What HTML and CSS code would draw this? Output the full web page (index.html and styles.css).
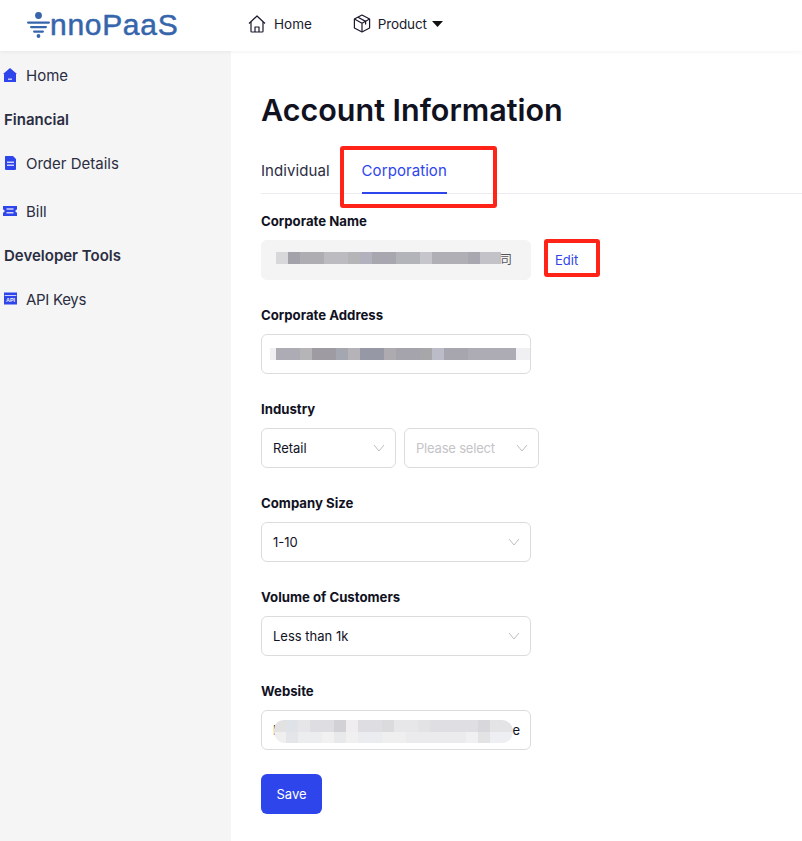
FILE: index.html
```html
<!DOCTYPE html>
<html lang="en">
<head>
<meta charset="utf-8">
<title>Account Information</title>
<link rel="stylesheet" href="styles.css">
</head>
<body>
<header class="topbar">
  <a class="logo">
    <svg class="logo-mark" width="23" height="28" viewBox="0 0 23 28"><circle cx="11.5" cy="4.5" r="3.4" fill="#3665ab"/><rect x="0" y="10.5" width="23" height="2.2" rx="1.1" fill="#3665ab"/><rect x="3" y="15" width="17" height="2.2" rx="1.1" fill="#3665ab"/><rect x="6" y="19.5" width="11" height="2.2" rx="1.1" fill="#3665ab"/><circle cx="11.5" cy="25" r="1.9" fill="#3665ab"/></svg>
    <span class="logo-text">nnoPaaS</span>
  </a>
  <nav class="topnav">
    <a class="topnav-item">
      <svg width="18" height="18" viewBox="0 0 18 18" fill="none" stroke="#1a1a2e" stroke-width="1.2" stroke-linejoin="round"><path d="M1 8.5 9 1l8 7.5"/><path d="M3 7v9.2a.8.8 0 0 0 .8.8h10.4a.8.8 0 0 0 .8-.8V7"/><path d="M7 17v-5h4v5"/></svg>
      <span>Home</span>
    </a>
    <a class="topnav-item">
      <svg width="18" height="19" viewBox="0 0 18 19" fill="none" stroke="#1a1a2e" stroke-width="1.2" stroke-linejoin="round"><path d="M9 1l7.6 4v9L9 18l-7.6-4V5z"/><path d="M1.4 5 9 9.2 16.6 5M9 9.2V18"/><path d="M5 3.2l7.6 4.2v3"/></svg>
      <span class="product-label">Product</span>
      <svg class="caret" width="11" height="6" viewBox="0 0 11 6"><path d="M0 0h11L5.5 6z" fill="#111"/></svg>
    </a>
  </nav>
</header>
<div class="shell">
  <aside class="sidebar">
    <a class="side-item side-home">
      <svg width="14" height="14" viewBox="0 0 14 14"><path d="M7 0 14 6H13V14H1V6H0z" fill="#2f45ec"/><rect x="5" y="10.6" width="4" height="1.1" fill="#f5f5f5"/></svg>
      <span>Home</span>
    </a>
    <div class="side-title side-financial">Financial</div>
    <a class="side-item side-order">
      <svg width="14" height="14" viewBox="0 0 14 14"><path d="M2.5 0H10l3 3v10a1 1 0 0 1-1 1H3a1 1 0 0 1-1-1V.8A.8.8 0 0 1 2.5 0z" fill="#2f45ec"/><rect x="4" y="5.6" width="7" height="1.2" fill="#f5f5f5"/><rect x="4" y="8.6" width="7" height="1.2" fill="#f5f5f5"/></svg>
      <span>Order Details</span>
    </a>
    <a class="side-item side-bill">
      <svg width="14" height="14" viewBox="0 0 14 14"><path d="M0 2h14v3.4a1.6 1.6 0 0 0 0 3.2V12H0V8.600a1.600 1.600 0 0 0 0-3.200z" fill="#2f45ec"/><rect x="3.500" y="4.400" width="7" height="1.200" fill="#f5f5f5"/><rect x="3.500" y="8.200" width="7" height="1.200" fill="#f5f5f5"/></svg>
      <span>Bill</span>
    </a>
    <div class="side-title side-dev">Developer Tools</div>
    <a class="side-item side-api">
      <svg width="14" height="14" viewBox="0 0 14 14"><rect x="1" y="0.500" width="13" height="12" fill="#2f45ec"/><rect x="1.700" y="3" width="11.600" height=".8" fill="#f5f5f5"/><text x="7.500" y="10.400" class="api-text" text-anchor="middle">API</text></svg>
      <span>API Keys</span>
    </a>
  </aside>
  <main class="content">
    <h1 class="page-title">Account Information</h1>
    <div class="tabs">
      <a class="tab">Individual</a>
      <a class="tab tab-active">Corporation</a>
    </div>
    <form class="form">
      <div class="field">
        <div class="label">Corporate Name</div>
        <div class="row">
          <div class="box box-filled">
            <span class="mosaic mosaic-name"></span>
            <span class="name-tail">司</span>
          </div>
          <a class="edit">Edit</a>
        </div>
      </div>
      <div class="field">
        <div class="label">Corporate Address</div>
        <div class="box"><span class="mosaic mosaic-address"></span></div>
      </div>
      <div class="field">
        <div class="label">Industry</div>
        <div class="row row-selects">
          <div class="box select-half">
            <span>Retail</span>
            <svg class="chev" width="12" height="8" viewBox="0 0 12 8" fill="none" stroke="#bfbfbf" stroke-width="1"><path d="M1 1l5 6 5-6"/></svg>
          </div>
          <div class="box select-half">
            <span class="placeholder">Please select</span>
            <svg class="chev" width="12" height="8" viewBox="0 0 12 8" fill="none" stroke="#bfbfbf" stroke-width="1"><path d="M1 1l5 6 5-6"/></svg>
          </div>
        </div>
      </div>
      <div class="field">
        <div class="label">Company Size</div>
        <div class="box">
          <span>1-10</span>
          <svg class="chev" width="12" height="8" viewBox="0 0 12 8" fill="none" stroke="#bfbfbf" stroke-width="1"><path d="M1 1l5 6 5-6"/></svg>
        </div>
      </div>
      <div class="field">
        <div class="label">Volume of Customers</div>
        <div class="box">
          <span>Less than 1k</span>
          <svg class="chev" width="12" height="8" viewBox="0 0 12 8" fill="none" stroke="#bfbfbf" stroke-width="1"><path d="M1 1l5 6 5-6"/></svg>
        </div>
      </div>
      <div class="field">
        <div class="label">Website</div>
        <div class="box">
          <span>h</span>
          <span class="mosaic mosaic-web"></span>
          <span class="web-tail">e</span>
        </div>
      </div>
      <a class="save">Save</a>
    </form>
    <div class="mark mark-tab"></div>
    <div class="mark mark-edit"></div>
  </main>
</div>
</body>
</html>
```
FILE: styles.css
```css
* { box-sizing: border-box; }
html, body { margin: 0; padding: 0; }
body {
  width: 802px;
  height: 841px;
  overflow: hidden;
  background: #fff;
  color: #11121f;
  font-family: Inter, "Noto Sans", "Noto Sans CJK SC", sans-serif;
  font-size: 14px;
}
.topbar {
  position: relative;
  z-index: 2;
  height: 51px;
  display: flex;
  align-items: center;
  background: #fff;
  box-shadow: 0 1px 4px rgba(0, 0, 0, 0.06);
}
.logo { display: flex; align-items: center; margin-left: 27px; width: 221px; padding-bottom: 2px; }
.logo-mark { flex: none; }
.logo-text {
  font-family: "Liberation Sans", Arial, sans-serif;
  font-size: 30px;
  color: #3665ab;
  letter-spacing: 0.7px;
  -webkit-text-stroke: 0.5px #3665ab;
}
.topnav { display: flex; gap: 41px; padding-bottom: 4px; }
.topnav-item { display: flex; align-items: center; gap: 7px; font-size: 13.5px; color: #1a1a2e; }
.topnav-item:first-child { gap: 8px; }
.product-label { letter-spacing: -0.15px; }
.caret { margin-left: -2px; }
.shell { display: flex; height: 790px; position: relative; }
.sidebar {
  width: 231px;
  flex: none;
  background: #f5f5f5;
  color: #2b2d42;
  padding-top: 13px;
}
.side-item { display: flex; align-items: center; gap: 9px; padding-left: 3px; height: 22px; font-size: 15px; color: #2b2d42; }
.side-title { padding-left: 4px; height: 22px; line-height: 22px; font-size: 15px; font-weight: 600; color: #2b2d42; }
.side-financial { margin-top: 23px; }
.side-order { margin-top: 21px; }
.side-bill { margin-top: 26px; }
.side-dev { margin-top: 23px; }
.side-api { margin-top: 21px; }
.side-api span { letter-spacing: -0.3px; }
.api-text { font-family: "Liberation Sans", sans-serif; font-size: 5.5px; font-weight: 700; fill: #f5f5f5; }
.content { flex: 1; padding-left: 30px; position: relative; }
.page-title { margin: 40px 0 0; font-size: 30.5px; line-height: 38px; font-weight: 600; color: #11121f; }
.tabs {
  display: flex;
  gap: 32px;
  margin-top: 21px;
  height: 44px;
  border-bottom: 1px solid #ececf0;
}
.tab { height: 44px; line-height: 24px; padding-top: 9px; font-size: 15px; letter-spacing: 0.07px; color: #2b2d42; }
.tab-active { color: #2f45ec; border-bottom: 2px solid #2f45ec; }
.form { display: flex; flex-direction: column; margin-top: 17px; }
.field { height: 94px; }
.label { height: 20px; line-height: 20px; font-size: 13.2px; font-weight: 700; color: #11121f; margin-bottom: 9px; }
.row { display: flex; align-items: center; gap: 24px; }
.row-selects { gap: 8px; }
.box {
  width: 270px;
  height: 40px;
  border: 1px solid #dcdcdf;
  border-radius: 6px;
  display: flex;
  align-items: center;
  justify-content: space-between;
  padding: 0 10px 0 11px;
  background: #fff;
  font-size: 13px;
  color: #11121f;
  position: relative;
}
.box-filled { background: #f4f4f5; border-color: #f4f4f5; }
.select-half { width: 135px; }
.placeholder { color: #c4c4c8; letter-spacing: -0.2px; }
.chev { flex: none; }
.edit { font-size: 13px; color: #2f45ec; }
.mosaic { display: block; position: absolute; height: 12px; }
.mosaic-name {
  left: 14px; top: 11px; width: 225px;
  background: linear-gradient(90deg, #d8d8da 0 12px, #a3a1a9 12px 24px, #adadb2 24px 48px, #bcbbc0 48px 72px, #b5b5b8 72px 84px, #b2b2bf 84px 96px, #a8a6ae 96px 120px, #b3b3ba 120px 144px, #c6c5cb 144px 156px, #b0afb6 156px 192px, #a9a7af 192px 204px, #c3c2c8 204px 225px);
}
.name-tail { position: absolute; left: 238px; top: 9px; font-size: 12px; color: #55555a; }
.mosaic-address {
  left: 8px; top: 13px; width: 260px;
  background: linear-gradient(90deg, #f0eff1 0 6px, #adacb4 6px 30px, #b5b5b8 30px 42px, #9e9ca2 42px 66px, #a5a7b0 66px 78px, #b6b3b8 78px 90px, #9798a6 90px 114px, #adabb0 114px 126px, #a5a4ac 126px 150px, #a7a7aa 150px 162px, #bbbcc8 162px 174px, #a7a6ae 174px 198px, #adacb4 198px 246px, #f0f0f3 246px 260px);
}
.mosaic-web {
  left: 12px; top: 9px; width: 239px; height: 23px;
  border-radius: 10px 12px 12px 12px;
  background-repeat: no-repeat;
  background-size: 100% 12px;
  background-position: top, bottom;
  background-image:
    linear-gradient(90deg, #e2e2e3 0 12px, #dfe3e8 12px 24px, #e6e6e9 24px 36px, #dedee2 36px 60px, #d2d1d6 60px 72px, #efedef 72px 84px, #dedee2 84px 108px, #dbdbde 108px 120px, #e7e7e9 120px 144px, #e3e3e6 144px 156px, #dfdfe3 156px 204px, #d8d8dc 204px 216px, #e4e4e7 216px 239px),
    linear-gradient(90deg, #efeff0 0 12px, #e3e5e8 12px 24px, #ecedef 24px 48px, #f1f1f1 48px 60px, #e8e9eb 60px 72px, #f0f0f0 72px 84px, #ebecf0 84px 108px, #efefef 108px 132px, #ebebed 132px 192px, #f0f0f2 192px 204px, #e3e3e5 204px 216px, #eeeff2 216px 239px);
}
.web-tail { position: relative; color: #11121f; }
.save {
  width: 61px;
  height: 40px;
  margin-top: -1px;
  background: #2f45ec;
  border-radius: 6px;
  color: #fff;
  font-size: 13px;
  display: flex;
  align-items: center;
  justify-content: center;
}
.mark { position: absolute; border: 4px solid #ff2318; border-radius: 3px; }
.mark-tab { left: 109px; top: 95px; width: 157px; height: 62px; }
.mark-edit { left: 313px; top: 188px; width: 56px; height: 38px; }
```
